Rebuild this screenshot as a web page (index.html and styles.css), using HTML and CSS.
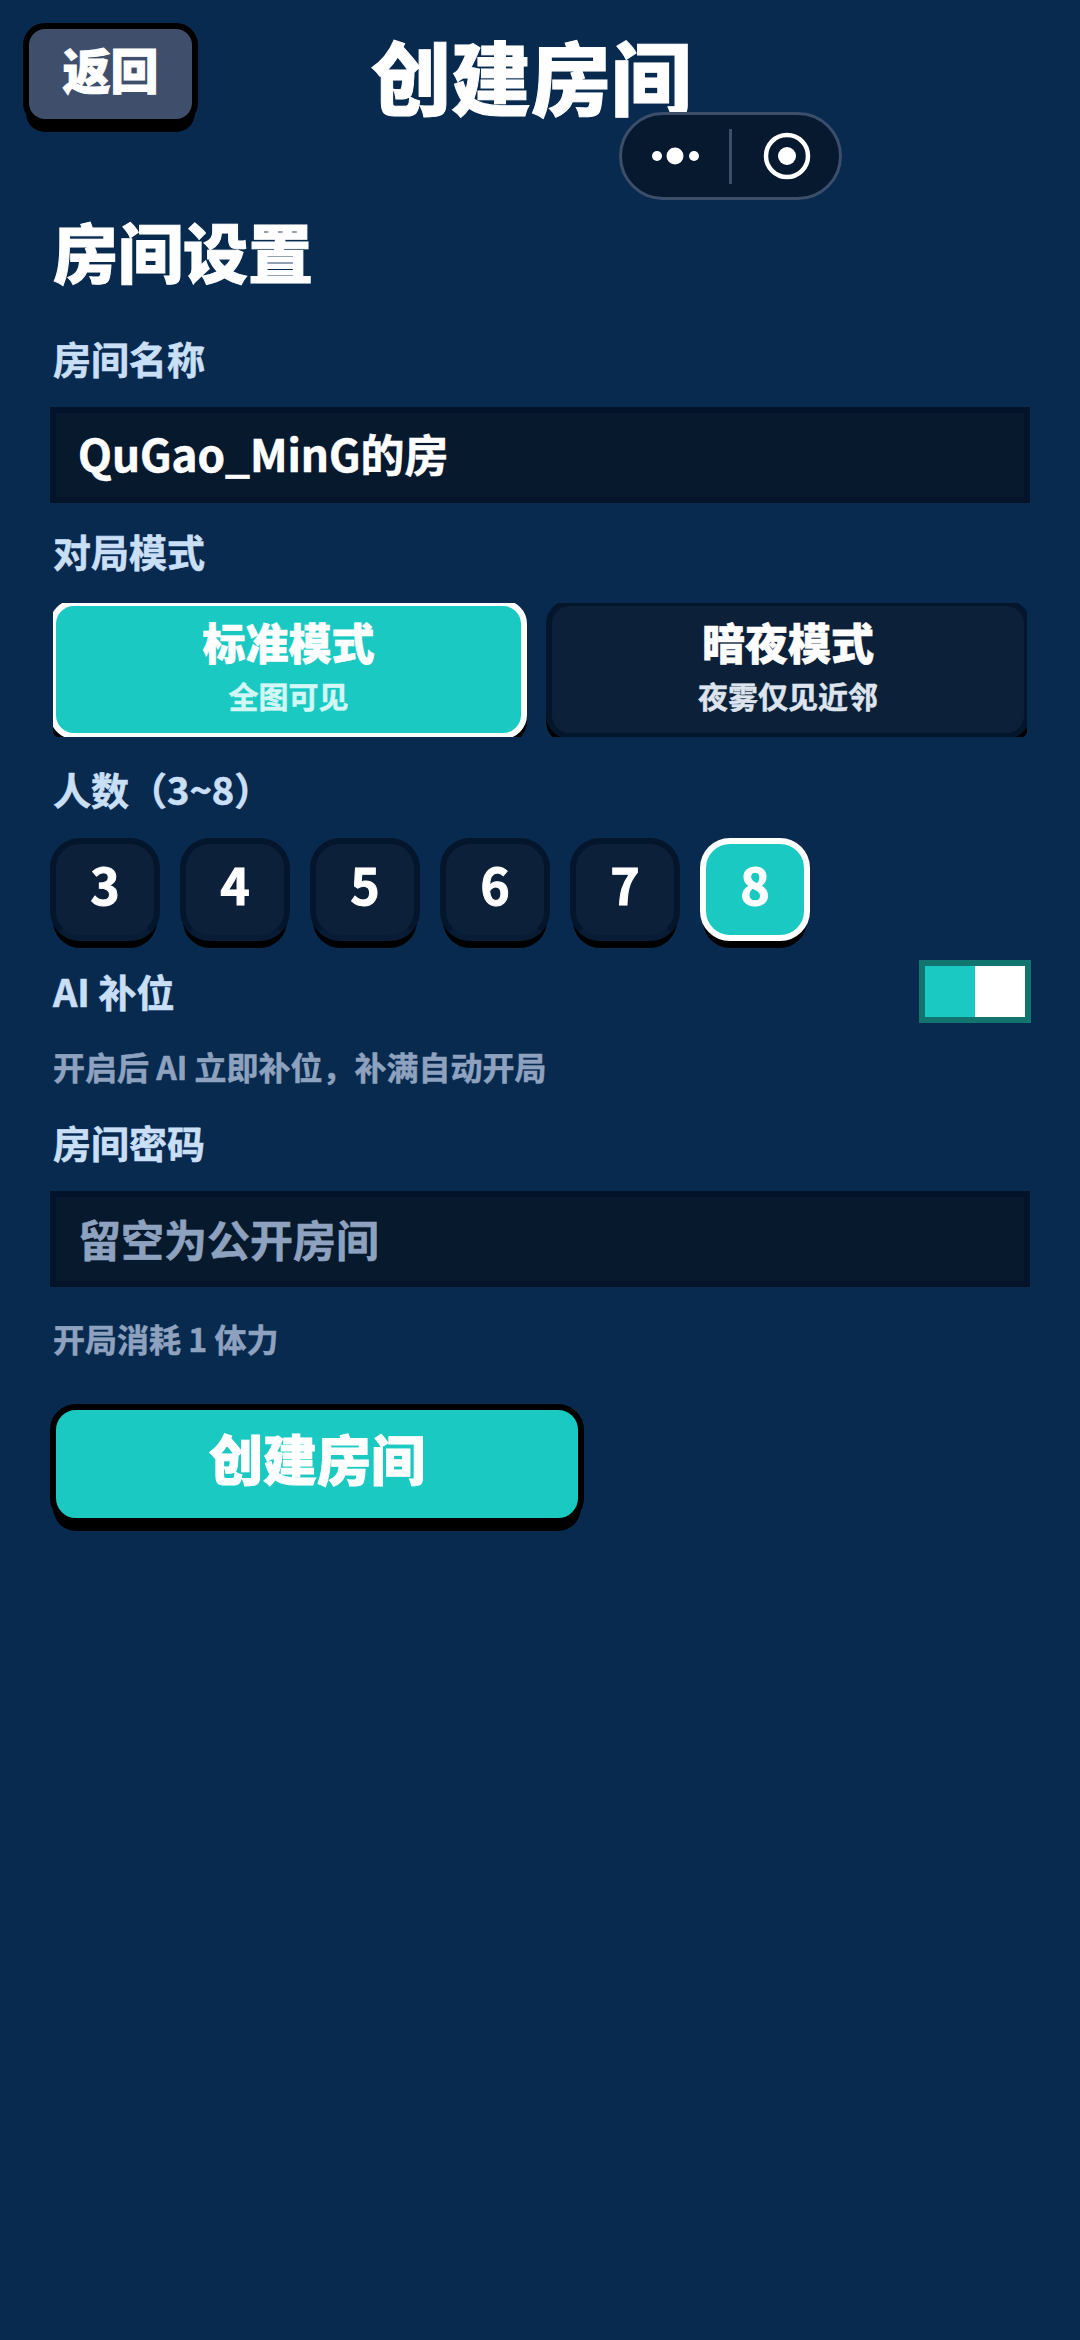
FILE: index.html
```html
<!DOCTYPE html>
<html lang="zh-CN">
  <head>
    <meta charset="UTF-8" />
    <meta name="viewport" content="width=device-width, initial-scale=1.0" />
    <title>创建房间</title>
    <link rel="stylesheet" href="styles.css">
  </head>
  <body>
    <div class="header">
      <div class="back-btn">返回</div>
      <div class="page-title">创建房间</div>
    </div>

    <!-- mini program capsule -->
    <div class="capsule">
      <svg class="capsule-more" width="56" height="20" viewBox="0 0 56 20">
        <circle cx="9" cy="10" r="5" fill="#fff" />
        <circle cx="27" cy="10" r="8.5" fill="#fff" />
        <circle cx="46" cy="10" r="5" fill="#fff" />
      </svg>
      <span class="capsule-line"></span>
      <svg class="capsule-close" width="48" height="48" viewBox="0 0 48 48">
        <circle cx="24" cy="24" r="21" fill="none" stroke="#fff" stroke-width="4.5" />
        <circle cx="24" cy="24" r="9" fill="#fff" />
      </svg>
    </div>

    <div class="form">
      <div class="section-title">房间设置</div>

      <div class="label label-name">房间名称</div>
      <div class="field">QuGao_MinG的房</div>

      <div class="label label-mode">对局模式</div>
      <div class="mode-row">
        <div class="mode-card mode-std active">
          <div class="mode-name">标准模式</div>
          <div class="mode-desc">全图可见</div>
        </div>
        <div class="mode-card mode-dark">
          <div class="mode-name">暗夜模式</div>
          <div class="mode-desc">夜雾仅见近邻</div>
        </div>
      </div>

      <div class="label label-count">人数（3~8）</div>
      <div class="num-row">
        <div class="num-btn">3</div>
        <div class="num-btn">4</div>
        <div class="num-btn">5</div>
        <div class="num-btn">6</div>
        <div class="num-btn">7</div>
        <div class="num-btn active">8</div>
      </div>

      <div class="ai-row">
        <div class="label">AI 补位</div>
        <div class="toggle"><span class="toggle-knob"></span></div>
      </div>
      <div class="hint hint-ai">开启后 AI 立即补位，补满自动开局</div>

      <div class="label label-pwd">房间密码</div>
      <div class="field placeholder">留空为公开房间</div>

      <div class="hint hint-cost">开局消耗 1 体力</div>

      <div class="create-btn">创建房间</div>
    </div>
  </body>
</html>
```

FILE: styles.css
```css
* {
  margin: 0;
  padding: 0;
  box-sizing: border-box;
  font-family: "Noto Sans CJK SC", "Noto Sans", sans-serif;
}

:root {
  --bg-color: #082a4f;
  --teal: #1ac9c2;
  --label: #c9dff6;
  --muted: #8ea2bf;
  --dark-card: #0c2139;
  --dark-border: #04162c;
}

body {
  background-color: var(--bg-color);
  color: #fff;
  width: 1080px;
  height: 2340px;
  position: relative;
  overflow: hidden;
}

.header {
  display: flex;
  align-items: flex-start;
  padding: 23px 0 0 23px;
}

.back-btn {
  width: 175px;
  height: 102px;
  background: #3f4f6b;
  border: 6px solid #000;
  border-radius: 22px;
  box-shadow: 0 10px 0 -3px #000;
  font-size: 48px;
  font-weight: 900;
  line-height: 78px;
  text-align: center;
  -webkit-text-stroke: 1px #fff;
}

.page-title {
  margin: 11px 0 0 173px;
  font-size: 80px;
  font-weight: 900;
  line-height: 80px;
  white-space: nowrap;
  -webkit-text-stroke: 1px #fff;
}

.capsule {
  position: absolute;
  left: 619px;
  top: 112px;
  width: 223px;
  height: 88px;
  display: flex;
  align-items: center;
  padding-left: 26px;
  background: #06192f;
  border: 3px solid #3b4f6b;
  border-radius: 44px;
}

.capsule-line {
  width: 3px;
  height: 55px;
  margin: 0 31px 0 25px;
  background: #3b4f6b;
}

.form {
  padding: 0 50px;
}

.section-title {
  margin-top: 93px;
  padding-left: 3px;
  font-size: 65px;
  font-weight: 900;
  line-height: 64px;
  -webkit-text-stroke: 1px #fff;
}

.label {
  padding-left: 3px;
  color: var(--label);
  font-size: 38px;
  font-weight: 700;
  line-height: 38px;
  -webkit-text-stroke: 0.6px var(--label);
}

.label-name {
  margin-top: 57px;
  margin-bottom: 30px;
}

.label-mode {
  margin-top: 29px;
  margin-bottom: 33px;
}

.label-count {
  margin-top: 33px;
  margin-bottom: 30px;
}

.label-pwd {
  margin-top: 41px;
  margin-bottom: 30px;
}

.field {
  height: 96px;
  padding-left: 22px;
  background: #06192d;
  border: 6px solid #03142a;
  font-size: 44px;
  font-weight: 700;
  line-height: 80px;
  -webkit-text-stroke: 0.6px #fff;
}

.placeholder {
  color: var(--muted);
  font-size: 43px;
  line-height: 82px;
  -webkit-text-stroke: 0.6px var(--muted);
}

/* the row crops the cards a little on every side */
.mode-row {
  display: flex;
  gap: 19px;
  height: 134px;
  margin: 0 3px;
  overflow: hidden;
}

.mode-card {
  height: 139px;
  margin-top: -3px;
  border: 6px solid var(--dark-border);
  border-radius: 24px;
  background: var(--dark-card);
  box-shadow: 0 6px 0 #000;
  text-align: center;
}

.mode-std {
  width: 477px;
  margin-left: -3px;
}

.mode-dark {
  width: 484px;
  margin-right: -3px;
}

.mode-card.active {
  background: var(--teal);
  border-color: #fff;
}

.mode-name {
  margin-top: 10px;
  font-size: 43px;
  font-weight: 900;
  line-height: 50px;
  -webkit-text-stroke: 0.6px #fff;
}

.mode-desc {
  margin-top: 11px;
  color: #dde4ee;
  font-size: 30px;
  font-weight: 700;
  line-height: 36px;
  -webkit-text-stroke: 0.5px #dde4ee;
}

.active .mode-desc {
  color: #d2f7f5;
  -webkit-text-stroke-color: #d2f7f5;
}

.num-row {
  display: flex;
  gap: 20px;
}

.num-btn {
  width: 110px;
  height: 103px;
  background: var(--dark-card);
  border: 6px solid var(--dark-border);
  border-bottom-color: #091c35;
  border-radius: 30px;
  box-shadow: 0 10px 0 -3px #000;
  font-size: 50px;
  font-weight: 700;
  line-height: 78px;
  text-align: center;
  -webkit-text-stroke: 1px #fff;
}

.num-btn.active {
  background: var(--teal);
  border-color: #fff;
}

.ai-row {
  display: flex;
  align-items: center;
  justify-content: space-between;
  margin-top: 19px;
}

.ai-row .label {
  margin-top: -2px;
}

.toggle {
  display: flex;
  justify-content: flex-end;
  width: 112px;
  height: 63px;
  margin-right: -1px;
  background: var(--teal);
  border: 6px solid #12746f;
}

.toggle-knob {
  width: 50px;
  background: #fff;
}

.hint {
  padding-left: 3px;
  color: var(--muted);
  font-size: 32px;
  font-weight: 700;
  line-height: 32px;
  -webkit-text-stroke: 0.5px var(--muted);
}

.hint-ai {
  margin-top: 27px;
}

.hint-cost {
  margin-top: 35px;
}

.create-btn {
  width: 534px;
  height: 120px;
  margin-top: 50px;
  background: var(--teal);
  border: 6px solid #000;
  border-radius: 26px;
  box-shadow: 0 10px 0 -3px #000;
  font-size: 54px;
  font-weight: 900;
  line-height: 96px;
  text-align: center;
  -webkit-text-stroke: 1px #fff;
}
```
